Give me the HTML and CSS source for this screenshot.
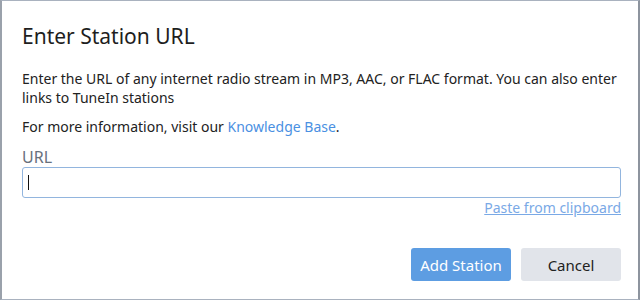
FILE: index.html
```html
<!DOCTYPE html>
<html>
<head>
<meta charset="utf-8">
<link rel="stylesheet" href="styles.css">
</head>
<body>
<div class="dialog">
  <h1 class="title">Enter Station URL</h1>
  <p class="text">Enter the URL of any internet radio stream in MP3, AAC, or FLAC format. You can also enter links to TuneIn stations</p>
  <p class="text more">For more information, visit our <a class="link" href="#">Knowledge Base</a>.</p>
  <label class="label">URL</label>
  <div class="input"><span class="caret"></span></div>
  <div class="paste-row"><a class="paste" href="#">Paste from clipboard</a></div>
  <div class="actions">
    <button class="btn primary">Add Station</button>
    <button class="btn secondary">Cancel</button>
  </div>
</div>
</body>
</html>
```
FILE: styles.css
```css
html, body {
  margin: 0;
  padding: 0;
  background: #ffffff;
}
body {
  width: 642px;
  height: 301px;
  font-family: "Noto Sans", "Open Sans", sans-serif;
  color: #222;
}
.dialog {
  box-sizing: border-box;
  width: 640px;
  height: 300px;
  border: 1px solid #a9b2bf;
  border-left: 2px solid #9aa1ab;
  border-right: 2px solid #8d949e;
  background: #fff;
  padding: 0 17px 0 20px;
  display: flex;
  flex-direction: column;
}
.title {
  margin: 20px 0 0;
  font-size: 21px;
  font-weight: 400;
  line-height: 30px;
  color: #1e1e1e;
}
.text {
  margin: 18px 0 0;
  font-size: 14px;
  line-height: 19px;
  color: #222;
}
.more {
  margin-top: 10px;
}
.link {
  color: #4a90e2;
  text-decoration: none;
}
.label {
  margin-top: 11px;
  font-size: 16px;
  line-height: 20px;
  color: #68707c;
}
.input {
  box-sizing: border-box;
  height: 31px;
  border: 1px solid #92b5de;
  border-radius: 3px;
  display: flex;
  align-items: center;
  padding-left: 5px;
}
.caret {
  width: 1px;
  height: 15px;
  background: #111;
}
.paste-row {
  display: flex;
  justify-content: flex-end;
  margin-top: 0;
}
.paste {
  font-size: 14px;
  line-height: 19px;
  color: #7aa9e6;
  text-decoration: underline;
}
.actions {
  display: flex;
  justify-content: flex-end;
  gap: 10px;
  margin-top: 31px;
}
.btn {
  width: 100px;
  height: 33px;
  border: none;
  border-radius: 3px;
  font-family: "Noto Sans", "Open Sans", sans-serif;
  font-size: 15px;
  padding: 0;
}
.primary {
  background: #5d9de2;
  color: #fff;
}
.secondary {
  background: #e1e4ea;
  color: #222;
}
```
